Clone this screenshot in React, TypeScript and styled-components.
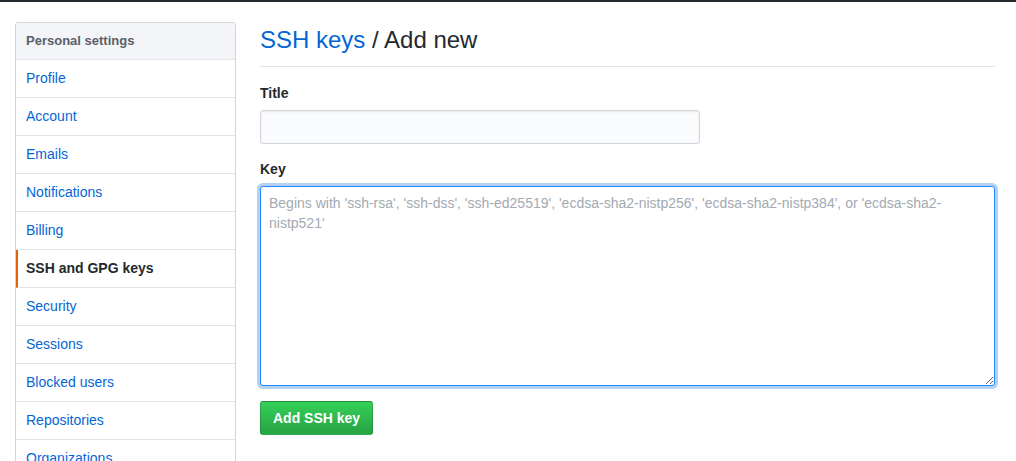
import React from "react";
import styled, { createGlobalStyle } from "styled-components";

const GlobalStyle = createGlobalStyle`
  body {
    margin: 0;
    background: #fff;
    font-family: "Liberation Sans", Arial, sans-serif;
    font-size: 14px;
    color: #24292e;
  }
`;

const TopBar = styled.div`
  height: 2px;
  background: #24292e;
`;

const Page = styled.div`
  display: grid;
  grid-template-columns: 221px 735px;
  column-gap: 24px;
  padding: 20px 21px 0 15px;
`;

const Menu = styled.nav`
  border: 1px solid #d1d5da;
  border-radius: 3px;
  align-self: start;
`;

const MenuHeader = styled.h3`
  margin: 0;
  padding: 8px 10px;
  line-height: 20px;
  font-size: 13px;
  font-weight: 600;
  color: #586069;
  background: #f3f5f8;
  border-bottom: 1px solid #e1e4e8;
  border-radius: 3px 3px 0 0;
`;

const MenuItem = styled.a<{ $selected?: boolean }>`
  display: block;
  padding: 8px 10px;
  line-height: 21px;
  font-size: 14px;
  text-decoration: none;
  border-bottom: 1px solid #e1e4e8;
  color: ${(p) => (p.$selected ? "#24292e" : "#0366d6")};
  font-weight: ${(p) => (p.$selected ? 600 : 400)};
  ${(p) =>
    p.$selected &&
    `
    border-left: 2px solid #e36209;
    padding-left: 8px;
  `}
`;

const Main = styled.main``;

const Heading = styled.h2`
  margin: 3px 0 0;
  padding-bottom: 11px;
  font-size: 24px;
  font-weight: 400;
  line-height: 1.25;
  border-bottom: 1px solid #e1e4e8;
  a {
    color: #0366d6;
    text-decoration: none;
  }
`;

const Field = styled.div`
  margin-top: 16px;
  & + & {
    margin-top: 15px;
  }
`;

const Label = styled.label`
  display: block;
  margin-bottom: 6px;
  font-weight: 600;
  line-height: 21px;
`;

const TextInput = styled.input`
  display: block;
  box-sizing: border-box;
  width: 440px;
  height: 34px;
  padding: 6px 8px;
  font: inherit;
  background: #fafbfc;
  border: 1px solid #d1d5da;
  border-radius: 3px;
  box-shadow: inset 0 1px 2px rgba(27, 31, 35, 0.075);
  outline: none;
`;

const KeyArea = styled.textarea`
  display: block;
  box-sizing: border-box;
  width: 100%;
  height: 200px;
  padding: 6px 8px;
  font: inherit;
  line-height: 20px;
  color: #24292e;
  border: 1px solid #2188ff;
  border-radius: 3px;
  box-shadow: 0 0 0 3px rgba(3, 102, 214, 0.3);
  outline: none;
  &::placeholder {
    color: #a3aab1;
  }
`;

const SubmitButton = styled.button`
  margin-top: 15px;
  height: 34px;
  padding: 6px 12px;
  font: inherit;
  font-weight: 700;
  color: #fff;
  background: linear-gradient(-180deg, #34d058 0%, #28a745 90%);
  border: 1px solid rgba(27, 31, 35, 0.2);
  border-radius: 3px;
  cursor: pointer;
`;

const items = [
  "Profile",
  "Account",
  "Emails",
  "Notifications",
  "Billing",
  "SSH and GPG keys",
  "Security",
  "Sessions",
  "Blocked users",
  "Repositories",
  "Organizations",
];

export default function App() {
  return (
    <>
      <GlobalStyle />
      <TopBar />
      <Page>
        <Menu>
          <MenuHeader>Personal settings</MenuHeader>
          {items.map((item) => (
            <MenuItem key={item} href="#" $selected={item === "SSH and GPG keys"}>
              {item}
            </MenuItem>
          ))}
        </Menu>
        <Main>
          <Heading>
            <a href="#">SSH keys</a> / Add new
          </Heading>
          <Field>
            <Label>Title</Label>
            <TextInput type="text" />
          </Field>
          <Field>
            <Label>Key</Label>
            <KeyArea
              autoFocus
              placeholder="Begins with 'ssh-rsa', 'ssh-dss', 'ssh-ed25519', 'ecdsa-sha2-nistp256', 'ecdsa-sha2-nistp384', or 'ecdsa-sha2-nistp521'"
            />
          </Field>
          <SubmitButton>Add SSH key</SubmitButton>
        </Main>
      </Page>
    </>
  );
}
